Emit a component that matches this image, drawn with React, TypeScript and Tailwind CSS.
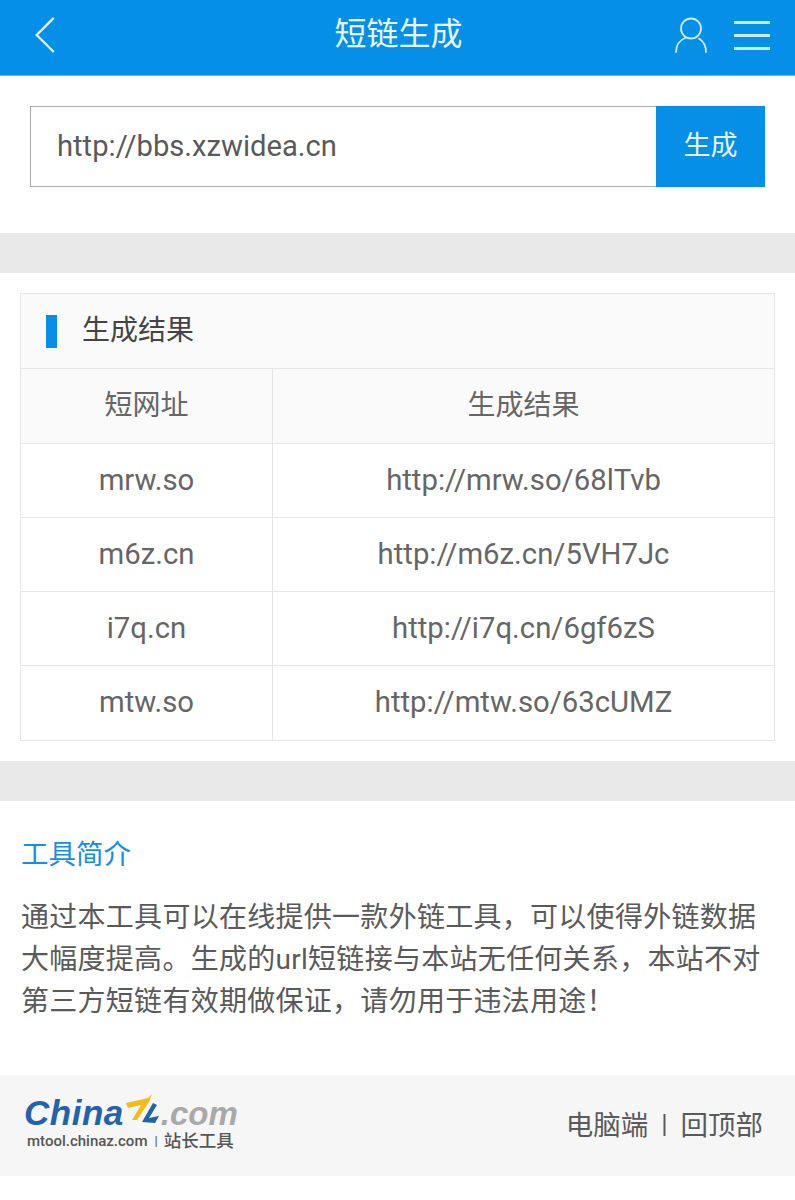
const rows = [
  ["mrw.so", "http://mrw.so/68lTvb"],
  ["m6z.cn", "http://m6z.cn/5VH7Jc"],
  ["i7q.cn", "http://i7q.cn/6gf6zS"],
  ["mtw.so", "http://mtw.so/63cUMZ"],
];

export default function App() {
  return (
    <div className="w-[795px] h-[1200px] bg-white overflow-hidden font-['Roboto','Noto_Sans_CJK_SC',sans-serif]">
      <header className="h-[76px] bg-[#058fe6] flex items-center pl-[33px] pr-[25px] border-b border-[#5cbcf5]">
        <div className="flex-1 flex items-center pb-[6px]">
          <svg width="24" height="37" viewBox="0 0 24 38" fill="none" stroke="#e6f5ff" strokeWidth="2.4">
            <path d="M21 2 L3.5 19.5 L21 37" />
          </svg>
        </div>
        <h1 className="text-[32px] leading-none text-[#eaf6ff] pb-[8px] pr-[6px]">短链生成</h1>
        <div className="flex-1 flex items-center justify-end gap-[26px] pb-[5px]">
          <svg width="34" height="36" viewBox="0 0 34 36" fill="none" stroke="#c8ecff" strokeWidth="1.8" strokeLinecap="round">
            <circle cx="17" cy="11.5" r="10" />
            <path d="M2 35 C2 28 6 23 12 20.5" />
            <path d="M25 21.5 C29 24 32 29 32 35" />
          </svg>
          <div className="flex flex-col gap-[10px] w-[36px]">
            <div className="h-[3px] bg-[#c8ecff]" />
            <div className="h-[3px] bg-[#c8ecff]" />
            <div className="h-[3px] bg-[#c8ecff]" />
          </div>
        </div>
      </header>

      <section className="h-[157px] pt-[30px] px-[30px]">
        <div className="flex h-[81px]">
          <div className="flex-1 border border-[#aaaaaa] border-r-0 flex items-center pl-[26px] text-[29.2px] text-[#5a5a5a]">
            http://bbs.xzwidea.cn
          </div>
          <div className="w-[109px] bg-[#058fe6] flex items-center justify-center text-[27px] text-[#e6f5ff]">
            生成
          </div>
        </div>
      </section>

      <div className="h-[40px] bg-[#e9e9e9]" />

      <section className="px-[20px] py-[20px]">
        <div className="border border-[#e6e6e6]">
          <div className="h-[75px] bg-[#fafafa] flex items-center pl-[25px] gap-[25px] border-b border-[#e6e6e6]">
            <div className="w-[11px] h-[33px] bg-[#058fe6]" />
            <span className="text-[28px] text-[#444444]">生成结果</span>
          </div>
          <div className="h-[75px] bg-[#fafafa] flex border-b border-[#e6e6e6] text-[28px] text-[#666666]">
            <div className="w-[252px] border-r border-[#e6e6e6] flex items-center justify-center">短网址</div>
            <div className="flex-1 flex items-center justify-center">生成结果</div>
          </div>
          {rows.map(([a, b], i) => (
            <div key={a} className={`h-[74px] flex text-[29.3px] text-[#666666] ${i < 3 ? "border-b border-[#e6e6e6]" : ""}`}>
              <div className="w-[252px] border-r border-[#e6e6e6] flex items-center justify-center">{a}</div>
              <div className="flex-1 flex items-center justify-center">{b}</div>
            </div>
          ))}
        </div>
      </section>

      <div className="h-[40px] bg-[#e9e9e9]" />

      <section className="h-[274px] px-[21px] pt-[34px]">
        <h2 className="text-[27.5px] leading-[40px] font-normal text-[#1590e0]">工具简介</h2>
        <p className="mt-[22px] text-[28px] tracking-[0.28px] leading-[42px] text-[#5a5a5a] w-[750px]">
          通过本工具可以在线提供一款外链工具，可以使得外链数据大幅度提高。生成的url短链接与本站无任何关系，本站不对第三方短链有效期做保证，请勿用于违法用途！
        </p>
      </section>

      <footer className="h-[101px] bg-[#f6f6f6] flex items-center justify-between pl-[24px] pr-[32px]">
        <div className="flex flex-col items-start pb-[6px]">
          <div className="flex items-end h-[36px] leading-none">
            <span className="font-['Liberation_Sans',sans-serif] font-bold italic text-[35px] text-[#2462ab] tracking-[0.5px]">China</span>
            <svg width="38" height="34" viewBox="0 0 36 34" className="-ml-[1px] mb-[2px]">
              <path d="M2 9 L24 4 L28 0 L25 8 L13 26 L8 26 L17 11 L4 14 Z" fill="#f2bd1b" />
              <path d="M18 28 L29 9 L33 11 L25 24 L35 22 L31 29 Z" fill="#2462ab" />
            </svg>
            <span className="font-['Liberation_Sans',sans-serif] font-bold italic text-[33px] text-[#a9a9a9]">.com</span>
          </div>
          <div className="flex items-center mt-[1px] ml-[3px] text-[#555555]">
            <span className="text-[15px] font-medium leading-[20px]">mtool.chinaz.com</span>
            <span className="text-[13px] ml-[7px] mr-[6px]">|</span>
            <span className="text-[17.5px] font-medium leading-[20px]">站长工具</span>
          </div>
        </div>
        <div className="text-[27.5px] text-[#5a5a5a] flex items-center">
          <span>电脑端</span>
          <span className="text-[26px] ml-[13px] mr-[13px] pb-[3px]">|</span>
          <span>回顶部</span>
        </div>
      </footer>
    </div>
  );
}
